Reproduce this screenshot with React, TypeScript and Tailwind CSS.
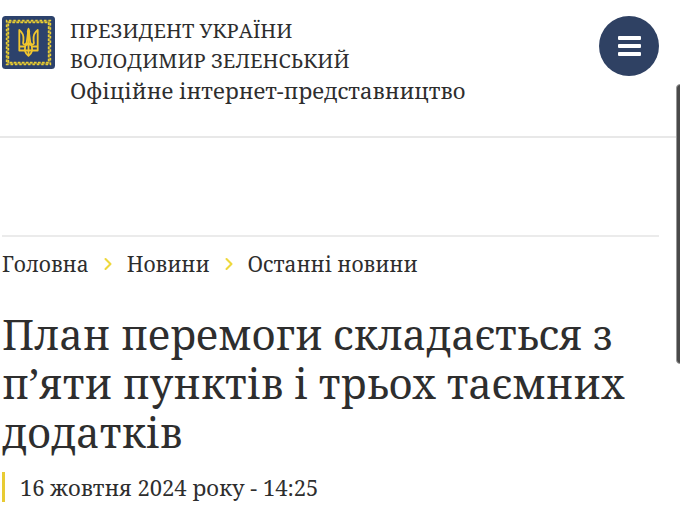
import { ChevronRight } from "lucide-react";

const breadcrumbs = [
  { title: "Головна", path: "/" },
  { title: "Новини", path: "/news" },
  { title: "Останні новини", path: "/news/last" },
];

function Emblem() {
  return (
    <svg viewBox="0 0 53 53" className="size-[53px] flex-none" aria-hidden="true">
      <rect width="53" height="53" rx="3.5" fill="#2c426c" />
      <rect x="5.5" y="5.5" width="42" height="42" fill="none" stroke="#6d6c50" strokeWidth="2.4" />
      <rect
        x="6.3"
        y="6.3"
        width="40.4"
        height="40.4"
        fill="none"
        stroke="#e9cf33"
        strokeWidth="1.8"
        strokeDasharray="2.6 1.44"
      />
      <rect
        x="4.6"
        y="4.6"
        width="43.8"
        height="43.8"
        fill="none"
        stroke="#e9cf33"
        strokeWidth="1.6"
        strokeDasharray="2.4 1.98"
        strokeDashoffset="2"
      />
      <g fill="none" stroke="#f0c62e" strokeWidth="1.8" strokeLinejoin="round">
        <path d="M17.3 14v20.500h5.500c.5 2.200 1.900 3.700 3.700 5.300 1.800-1.600 3.200-3.100 3.700-5.300h5.500V14c-3.600 2.500-4.600 6-4.100 10.500l.3 2.500c0 2-3.200 2-3.600-.5L26.500 13l-1.800 13.500c-.4 2.500-3.600 2.500-3.600.5l.3-2.500c.5-4.500-.5-8-4.100-10.500z" />
        <path d="M17.500 30.500h5l4-3.500 4 3.500h5M22.800 34.500l.4-4M30.200 34.500l-.4-4M26.500 27v12M22.800 34.500h7.400" />
      </g>
      <path d="M26.500 11.500l1.600 3.500-.7 12h-1.800l-.7-12z" fill="#f0c62e" />
    </svg>
  );
}

function Header() {
  return (
    <header className="flex items-start border-b-2 border-[#e8e8e8] pt-4 pr-[21px] pb-8 pl-[2px]">
      <a href="/" className="flex flex-1 gap-[15px]">
        <Emblem />
        <span className="text-[20px] leading-[30px]">
          ПРЕЗИДЕНТ УКРАЇНИ
          <br />
          ВОЛОДИМИР ЗЕЛЕНСЬКИЙ
          <span className="block text-[22px] leading-[28px]">
            Офіційне інтернет-представництво
          </span>
        </span>
      </a>
      <button
        type="button"
        aria-label="Меню"
        className="flex size-[60px] flex-none flex-col items-center justify-center gap-1 rounded-full bg-[#2f4163]"
      >
        <span className="h-1 w-[23px] rounded-[1px] bg-white" />
        <span className="h-1 w-[23px] rounded-[1px] bg-white" />
        <span className="h-1 w-[23px] rounded-[1px] bg-white" />
      </button>
    </header>
  );
}

function Breadcrumbs() {
  return (
    <nav className="border-t-2 border-[#ebebeb] pt-3">
      <ol className="flex items-center text-[21px] leading-[30px]">
        {breadcrumbs.map((item, index) => (
          <li key={item.path} className="flex items-center">
            {index > 0 ? (
              <ChevronRight className="mx-[9px] size-5 text-[#eed83c]" strokeWidth={2.5} />
            ) : null}
            <a href={item.path}>{item.title}</a>
          </li>
        ))}
      </ol>
    </nav>
  );
}

export default function App() {
  return (
    <div className="min-h-screen bg-white font-['Noto_Serif','DejaVu_Serif_Condensed','DejaVu_Serif',serif] text-[#2e2e2e]">
      <Header />
      <main className="pt-[97px] pr-[21px] pl-[2px]">
        <Breadcrumbs />
        <h1 className="mt-[31px] text-[41px] leading-[49px]">
          План перемоги складається з п’яти пунктів і трьох таємних додатків
        </h1>
        <p className="mt-[15px] border-l-3 border-[#e8cb33] pl-[15px] text-[22px] leading-[30px]">
          <time dateTime="2024-10-16T14:25">16 жовтня 2024 року - 14:25</time>
        </p>
      </main>
      <div className="fixed top-[84px] -right-1 h-[280px] w-2 rounded-md border border-[#999] bg-[#4a4a4a]" />
    </div>
  );
}
